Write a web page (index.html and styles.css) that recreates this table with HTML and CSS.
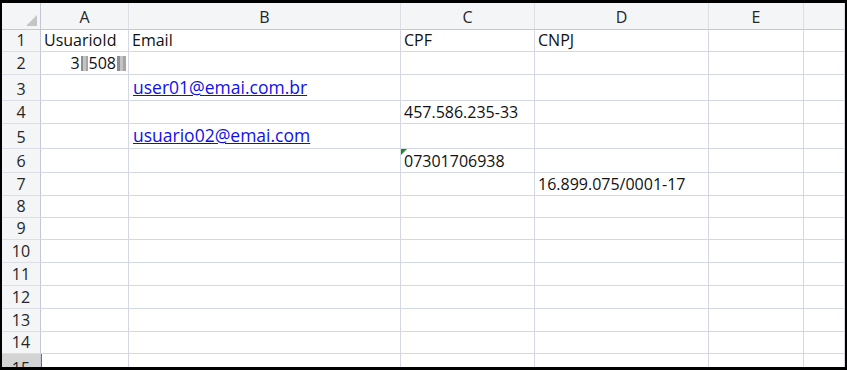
FILE: index.html
```html
<!DOCTYPE html>
<html>
<head>
<meta charset="utf-8">
<link rel="stylesheet" href="styles.css">
</head>
<body>
<div class="frame">
  <div class="sheet">
    <div class="corner"><span class="tri"></span></div>
    <div class="ch">A</div><div class="ch">B</div><div class="ch">C</div><div class="ch">D</div><div class="ch">E</div><div class="ch"></div>

    <div class="rh">1</div><div class="c">UsuarioId</div><div class="c">Email</div><div class="c">CPF</div><div class="c">CNPJ</div><div class="c"></div><div class="c"></div>

    <div class="rh">2</div><div class="c num">3<span class="blur b1"></span>508<span class="blur b2"></span></div><div class="c"></div><div class="c"></div><div class="c"></div><div class="c"></div><div class="c"></div>

    <div class="rh">3</div><div class="c"></div><div class="c link"><a href="#">user01@emai.com.br</a></div><div class="c"></div><div class="c"></div><div class="c"></div><div class="c"></div>

    <div class="rh">4</div><div class="c"></div><div class="c"></div><div class="c">457.586.235-33</div><div class="c"></div><div class="c"></div><div class="c"></div>

    <div class="rh">5</div><div class="c"></div><div class="c link"><a href="#">usuario02@emai.com</a></div><div class="c"></div><div class="c"></div><div class="c"></div><div class="c"></div>

    <div class="rh">6</div><div class="c"></div><div class="c"></div><div class="c flag">07301706938</div><div class="c"></div><div class="c"></div><div class="c"></div>

    <div class="rh">7</div><div class="c"></div><div class="c"></div><div class="c"></div><div class="c">16.899.075/0001-17</div><div class="c"></div><div class="c"></div>

    <div class="rh">8</div><div class="c"></div><div class="c"></div><div class="c"></div><div class="c"></div><div class="c"></div><div class="c"></div>
    <div class="rh">9</div><div class="c"></div><div class="c"></div><div class="c"></div><div class="c"></div><div class="c"></div><div class="c"></div>
    <div class="rh">10</div><div class="c"></div><div class="c"></div><div class="c"></div><div class="c"></div><div class="c"></div><div class="c"></div>
    <div class="rh">11</div><div class="c"></div><div class="c"></div><div class="c"></div><div class="c"></div><div class="c"></div><div class="c"></div>
    <div class="rh">12</div><div class="c"></div><div class="c"></div><div class="c"></div><div class="c"></div><div class="c"></div><div class="c"></div>
    <div class="rh">13</div><div class="c"></div><div class="c"></div><div class="c"></div><div class="c"></div><div class="c"></div><div class="c"></div>
    <div class="rh">14</div><div class="c"></div><div class="c"></div><div class="c"></div><div class="c"></div><div class="c"></div><div class="c"></div>
    <div class="rh sel">15</div><div class="c active"></div><div class="c"></div><div class="c"></div><div class="c"></div><div class="c"></div><div class="c"></div>
  </div>
</div>
</body>
</html>
```
FILE: styles.css
```css
* { box-sizing: border-box; }
html, body { margin: 0; padding: 0; background: #000; }
.frame {
  width: 847px;
  height: 370px;
  border-style: solid;
  border-color: #000;
  border-width: 3px 2px 3px 2px;
  background: #fff;
  overflow: hidden;
}
.sheet {
  display: grid;
  grid-template-columns: 39px 88px 272px 134px 174px 95px 41px;
  grid-template-rows: 27px 22px 23px 26px 23px 25px 24px 23px 22px 22px 23px 23px 23px 23px 22px 23px;
  font-family: "Open Sans", "Liberation Sans", sans-serif;
  font-size: 16px;
  color: #111;
}
.sheet > div {
  border-right: 1px solid #d4d8e3;
  border-bottom: 1px solid #d4d8e3;
  overflow: hidden;
  white-space: nowrap;
  position: relative;
}
.corner, .ch, .rh {
  background: #f4f5f7;
  color: #262626;
}
.corner { border-right-color: #c3c8d2 !important; border-bottom-color: #c3c8d2 !important; }
.tri {
  position: absolute;
  right: 3px;
  bottom: 3px;
  width: 0;
  height: 0;
  border-left: 11px solid transparent;
  border-bottom: 11px solid #c4c4c4;
}
.ch {
  display: flex;
  align-items: center;
  justify-content: center;
  padding-top: 2px;
  border-right-color: #dcdfe6 !important;
  border-bottom-color: #c3c8d2 !important;
}
.rh {
  display: flex;
  align-items: flex-end;
  justify-content: center;
  padding-bottom: 1px;
  line-height: 20px;
  border-right-color: #c3c8d2 !important;
  border-bottom-color: #dcdfe6 !important;
}
.rh.sel { background: #d4d4d4; align-items: flex-start; padding-top: 4px; }
.c {
  display: flex;
  align-items: flex-end;
  padding: 0 3px 1px 3px;
  line-height: 20px;
}
.num { justify-content: flex-end; padding-right: 2px; }
.blur {
  display: inline-block;
  height: 15px;
  margin-bottom: 2px;
  background: linear-gradient(90deg, #8e8e8e 0 30%, #c4c4c4 30% 65%, #a6a6a6 65%);
}
.b1 { width: 7px; margin-left: 1px; margin-right: 1px; }
.b2 { width: 9px; margin-left: 1px; }
.link { padding-left: 4px; padding-bottom: 3px; }
.link a { color: #1010ee; text-decoration: underline; font-size: 17.5px; }
.flag::before {
  content: "";
  position: absolute;
  left: 0;
  top: 0;
  border-top: 6px solid #1f8a2a;
  border-right: 6px solid transparent;
}
.active::before {
  content: "";
  position: absolute;
  left: -1px;
  top: 0;
  bottom: 0;
  width: 2px;
  background: #1e9d4a;
}
```
